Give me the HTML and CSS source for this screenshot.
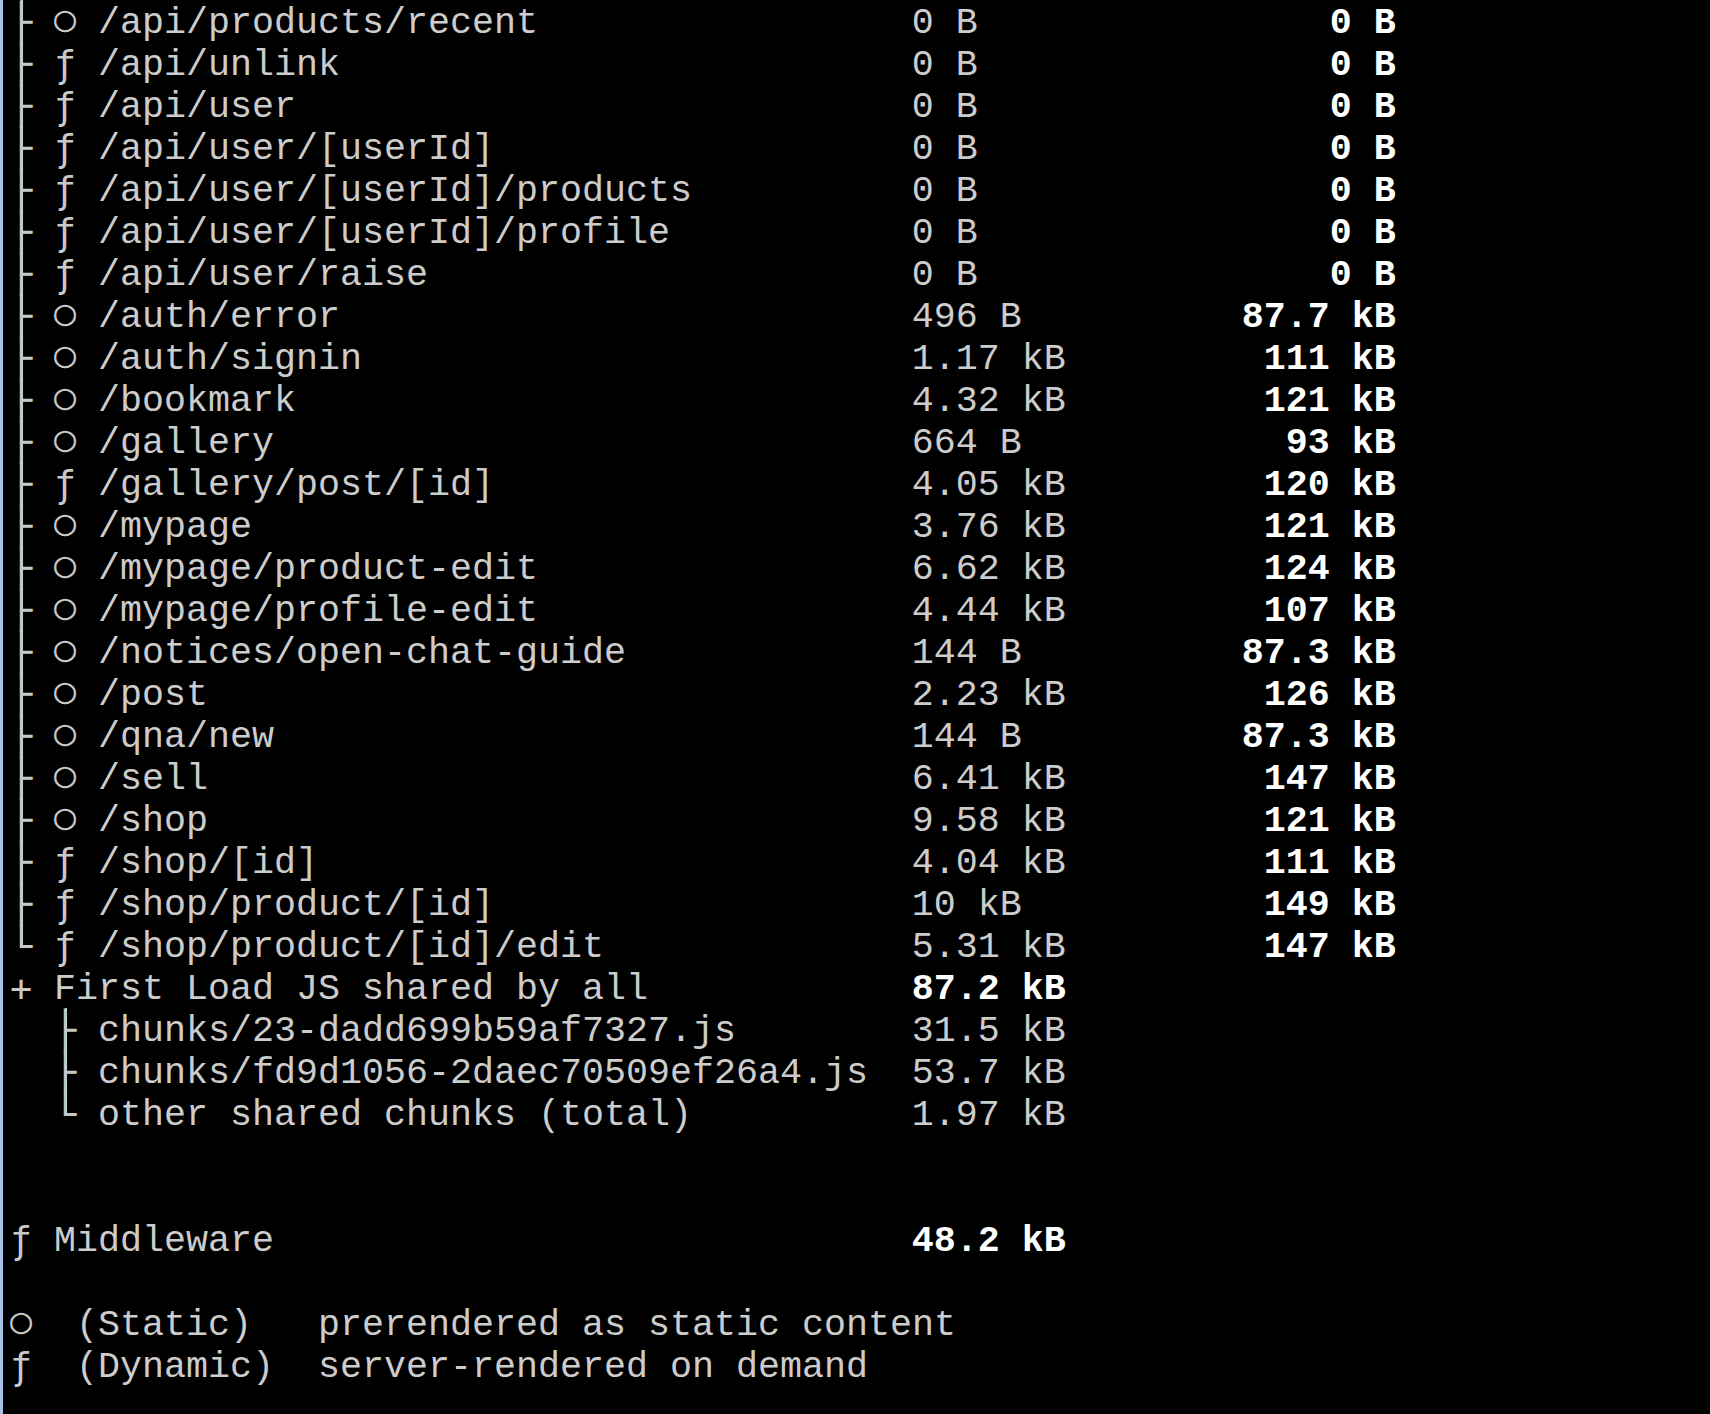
FILE: index.html
```html
<!DOCTYPE html>
<html lang="en">
<head>
<meta charset="utf-8">
<title>next build output</title>
<link rel="stylesheet" href="styles.css">
</head>
<body>
<main class="term">
  <div class="row"><span class="c1 tee">├</span><span class="c2 st">○</span><span class="name">/api/products/recent</span><span class="size">0 B</span><span class="fl">0 B</span></div>
  <div class="row"><span class="c1 tee">├</span><span class="c2">ƒ</span><span class="name">/api/unlink</span><span class="size">0 B</span><span class="fl">0 B</span></div>
  <div class="row"><span class="c1 tee">├</span><span class="c2">ƒ</span><span class="name">/api/user</span><span class="size">0 B</span><span class="fl">0 B</span></div>
  <div class="row"><span class="c1 tee">├</span><span class="c2">ƒ</span><span class="name">/api/user/[userId]</span><span class="size">0 B</span><span class="fl">0 B</span></div>
  <div class="row"><span class="c1 tee">├</span><span class="c2">ƒ</span><span class="name">/api/user/[userId]/products</span><span class="size">0 B</span><span class="fl">0 B</span></div>
  <div class="row"><span class="c1 tee">├</span><span class="c2">ƒ</span><span class="name">/api/user/[userId]/profile</span><span class="size">0 B</span><span class="fl">0 B</span></div>
  <div class="row"><span class="c1 tee">├</span><span class="c2">ƒ</span><span class="name">/api/user/raise</span><span class="size">0 B</span><span class="fl">0 B</span></div>
  <div class="row"><span class="c1 tee">├</span><span class="c2 st">○</span><span class="name">/auth/error</span><span class="size">496 B</span><span class="fl">87.7 kB</span></div>
  <div class="row"><span class="c1 tee">├</span><span class="c2 st">○</span><span class="name">/auth/signin</span><span class="size">1.17 kB</span><span class="fl">111 kB</span></div>
  <div class="row"><span class="c1 tee">├</span><span class="c2 st">○</span><span class="name">/bookmark</span><span class="size">4.32 kB</span><span class="fl">121 kB</span></div>
  <div class="row"><span class="c1 tee">├</span><span class="c2 st">○</span><span class="name">/gallery</span><span class="size">664 B</span><span class="fl">93 kB</span></div>
  <div class="row"><span class="c1 tee">├</span><span class="c2">ƒ</span><span class="name">/gallery/post/[id]</span><span class="size">4.05 kB</span><span class="fl">120 kB</span></div>
  <div class="row"><span class="c1 tee">├</span><span class="c2 st">○</span><span class="name">/mypage</span><span class="size">3.76 kB</span><span class="fl">121 kB</span></div>
  <div class="row"><span class="c1 tee">├</span><span class="c2 st">○</span><span class="name">/mypage/product-edit</span><span class="size">6.62 kB</span><span class="fl">124 kB</span></div>
  <div class="row"><span class="c1 tee">├</span><span class="c2 st">○</span><span class="name">/mypage/profile-edit</span><span class="size">4.44 kB</span><span class="fl">107 kB</span></div>
  <div class="row"><span class="c1 tee">├</span><span class="c2 st">○</span><span class="name">/notices/open-chat-guide</span><span class="size">144 B</span><span class="fl">87.3 kB</span></div>
  <div class="row"><span class="c1 tee">├</span><span class="c2 st">○</span><span class="name">/post</span><span class="size">2.23 kB</span><span class="fl">126 kB</span></div>
  <div class="row"><span class="c1 tee">├</span><span class="c2 st">○</span><span class="name">/qna/new</span><span class="size">144 B</span><span class="fl">87.3 kB</span></div>
  <div class="row"><span class="c1 tee">├</span><span class="c2 st">○</span><span class="name">/sell</span><span class="size">6.41 kB</span><span class="fl">147 kB</span></div>
  <div class="row"><span class="c1 tee">├</span><span class="c2 st">○</span><span class="name">/shop</span><span class="size">9.58 kB</span><span class="fl">121 kB</span></div>
  <div class="row"><span class="c1 tee">├</span><span class="c2">ƒ</span><span class="name">/shop/[id]</span><span class="size">4.04 kB</span><span class="fl">111 kB</span></div>
  <div class="row"><span class="c1 tee">├</span><span class="c2">ƒ</span><span class="name">/shop/product/[id]</span><span class="size">10 kB</span><span class="fl">149 kB</span></div>
  <div class="row"><span class="c1 end">└</span><span class="c2">ƒ</span><span class="name">/shop/product/[id]/edit</span><span class="size">5.31 kB</span><span class="fl">147 kB</span></div>
  <div class="row"><span class="c1">+</span><span class="wide">First Load JS shared by all</span><span class="size strong">87.2 kB</span></div>
  <div class="row"><span class="c1"></span><span class="c2 tee">├</span><span class="name">chunks/23-dadd699b59af7327.js</span><span class="size">31.5 kB</span></div>
  <div class="row"><span class="c1"></span><span class="c2 tee">├</span><span class="name">chunks/fd9d1056-2daec70509ef26a4.js</span><span class="size">53.7 kB</span></div>
  <div class="row"><span class="c1"></span><span class="c2 end">└</span><span class="name">other shared chunks (total)</span><span class="size">1.97 kB</span></div>
  <div class="row blank"></div>
  <div class="row blank"></div>
  <div class="row"><span class="c1">ƒ</span><span class="wide">Middleware</span><span class="size strong">48.2 kB</span></div>
  <div class="row blank"></div>
  <div class="legend"><span class="sym st">○</span><span class="kind">(Static)</span><span>prerendered as static content</span></div>
  <div class="legend"><span class="sym">ƒ</span><span class="kind">(Dynamic)</span><span>server-rendered on demand</span></div>
</main>
</body>
</html>
```

FILE: styles.css
```css
html, body {
  margin: 0;
  padding: 0;
  background: #000;
  height: 100%;
}

.term {
  box-sizing: border-box;
  min-height: 100vh;
  border-left: 3px solid #a9c3e8;
  padding: 2px 0 0 7px;
  font-family: "Liberation Mono", "DejaVu Sans Mono", monospace;
  font-size: 36.667px;
  line-height: 42px;
  color: #cccccc;
  overflow: hidden;
}

.row {
  display: grid;
  grid-template-columns: 2ch 2ch 37ch 15ch 7ch;
  height: 42px;
  white-space: pre;
}

.row.blank {
  display: block;
}

.c1,
.c2,
.sym {
  font-family: "DejaVu Sans Mono", monospace;
  color: #c8c8c8;
  line-height: 42px;
}

/* ○ glyph sits low in DejaVu; raise it to the x-height centre */
.st {
  line-height: 34px;
}

/* tree connectors: keep the glyph, bridge the gaps between rows */
.tee,
.end {
  position: relative;
}

.tee::before,
.end::before {
  content: "";
  position: absolute;
  left: 11px;
  width: 2px;
  top: -2px;
  background: #c8c8c8;
}

.tee::before {
  bottom: -1px;
}

.end::before {
  height: 24px;
}

.wide {
  grid-column: 2 / span 2;
}

.size {
  grid-column: 4;
}

.fl {
  grid-column: 5;
  text-align: right;
  color: #ffffff;
  font-weight: bold;
}

.strong {
  color: #ffffff;
  font-weight: bold;
}

.legend {
  display: grid;
  grid-template-columns: 3ch 11ch auto;
  height: 42px;
  white-space: pre;
}
```
